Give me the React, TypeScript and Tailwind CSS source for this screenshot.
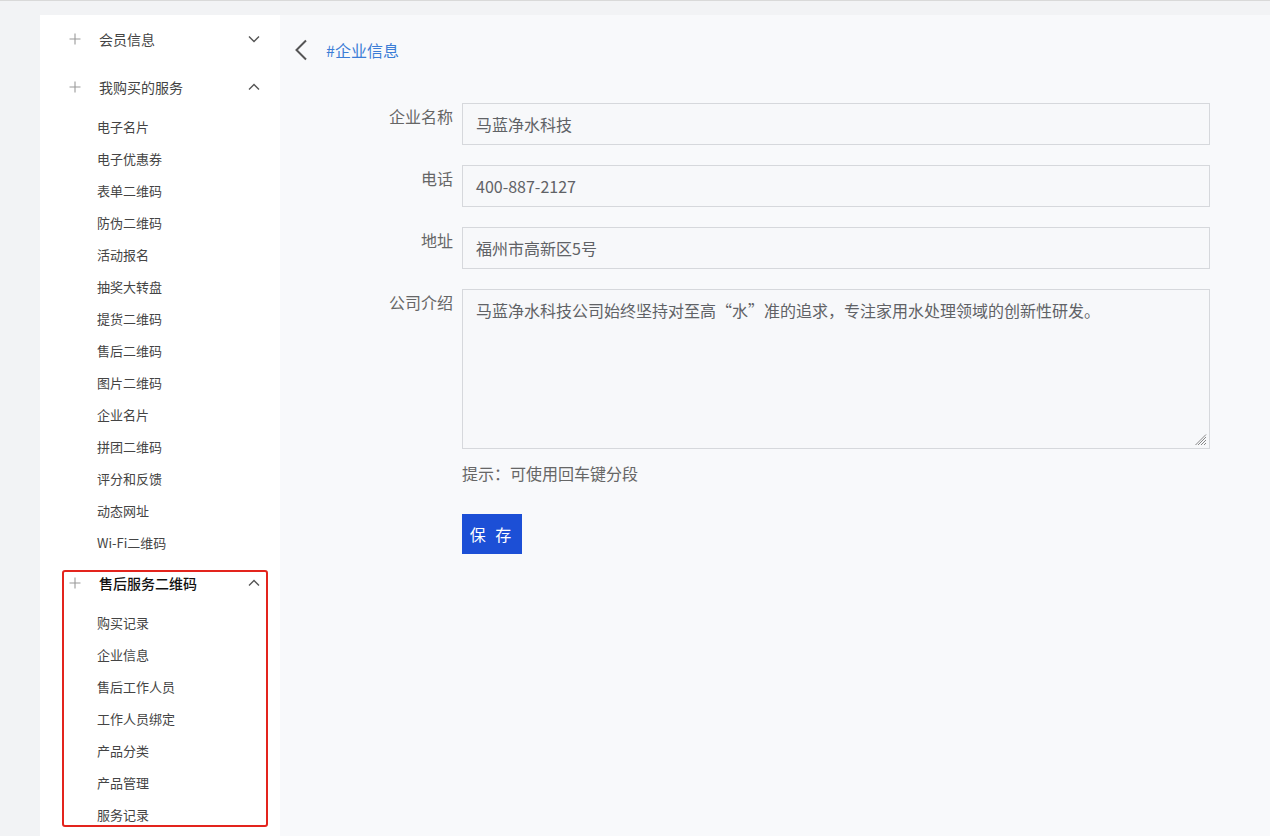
import React from 'react';

const font = { fontFamily: '"Noto Sans CJK SC", "Noto Sans", sans-serif' };

const Plus = () => (
  <svg width="12" height="12" viewBox="0 0 12 12" className="shrink-0">
    <path d="M6 0.5v11M0.5 6h11" stroke="#9a9a9a" strokeWidth="1.1" fill="none" />
  </svg>
);

const Chevron = ({ up }: { up?: boolean }) => (
  <svg width="12" height="8" viewBox="0 0 12 8" className="shrink-0">
    <path
      d={up ? 'M1 6.5L6 1.5l5 5' : 'M1 1.5l5 5 5-5'}
      stroke="#555"
      strokeWidth="1.4"
      fill="none"
    />
  </svg>
);

interface GroupProps {
  title: string;
  open?: boolean;
  bold?: boolean;
  items?: string[];
  marked?: boolean;
}

const Group: React.FC<GroupProps> = ({ title, open, bold, items = [], marked }) => (
  <div className="relative">
    <div className="flex items-center h-[48px] pl-[29px] pr-[20px]">
      <Plus />
      <span
        className={`ml-[18px] flex-1 text-[14px] ${bold ? 'text-[#111] font-medium' : 'text-[#444]'}`}
      >
        {title}
      </span>
      <Chevron up={open} />
    </div>
    {open && (
      <div>
        {items.map((it) => (
          <div key={it} className="h-[32px] flex items-center pl-[57px] text-[13px] text-[#444]">
            {it}
          </div>
        ))}
      </div>
    )}
    {/* red highlight box drawn over the group */}
    {marked && (
      <div className="absolute left-[22px] right-[12px] top-[11px] h-[257px] border-2 border-[#e3241d] rounded-[3px] pointer-events-none" />
    )}
  </div>
);

const services = [
  '电子名片',
  '电子优惠券',
  '表单二维码',
  '防伪二维码',
  '活动报名',
  '抽奖大转盘',
  '提货二维码',
  '售后二维码',
  '图片二维码',
  '企业名片',
  '拼团二维码',
  '评分和反馈',
  '动态网址',
  'Wi-Fi二维码',
];

const afterSale = ['购买记录', '企业信息', '售后工作人员', '工作人员绑定', '产品分类', '产品管理', '服务记录'];

const Field = ({ label, children }: { label: string; children: React.ReactNode }) => (
  <div className="flex">
    <div className="w-[91px] shrink-0 text-right pr-[9px] pt-[1px] text-[16px] text-[#666]">{label}</div>
    <div className="flex-1">{children}</div>
  </div>
);

const inputCls =
  'w-full h-[42px] border border-[#d6d8dc] bg-[#f7f8fa] px-[13px] flex items-center text-[16px] text-[#606266]';

export default function App() {
  return (
    <div className="w-[1270px] h-[836px] overflow-hidden bg-[#f2f3f5] border-t border-[#d9d9d9]" style={font}>
      <div className="flex pt-[14px] h-full">
        <div className="w-[40px] shrink-0" />
        <aside className="w-[240px] shrink-0 bg-white">
          <Group title="会员信息" />
          <Group title="我购买的服务" open items={services} />
          <Group title="售后服务二维码" open bold marked items={afterSale} />
        </aside>
        <main className="flex-1 bg-[#f8f9fb]">
          <div className="flex items-center h-[24px] mt-[23px] pl-[14px]">
            <svg width="14" height="22" viewBox="0 0 14 22">
              <path d="M12 1.5L2.5 11 12 20.5" stroke="#555" strokeWidth="2" fill="none" />
            </svg>
            <span className="ml-[18px] text-[16px] text-[#3c7dd6]">#企业信息</span>
          </div>
          <div className="pl-[91px] pr-[60px] mt-[41px] flex flex-col gap-[20px]">
            <Field label="企业名称">
              <div className={inputCls}>马蓝净水科技</div>
            </Field>
            <Field label="电话">
              <div className={inputCls}>400-887-2127</div>
            </Field>
            <Field label="地址">
              <div className={inputCls}>福州市高新区5号</div>
            </Field>
            <Field label="公司介绍">
              <div className="relative w-full h-[160px] border border-[#d6d8dc] bg-[#f7f8fa] px-[13px] pt-[8px] text-[16px] text-[#606266]">
                马蓝净水科技公司始终坚持对至高“水”准的追求，专注家用水处理领域的创新性研发。
                <svg width="12" height="12" viewBox="0 0 12 12" className="absolute right-[2px] bottom-[2px]">
                  <path d="M11 3L3 11M11 6L6 11M11 9L9 11M11 0.5L0.5 11" stroke="#888" strokeWidth="1" fill="none" />
                </svg>
              </div>
              <div className="mt-[12px] text-[16px] text-[#666]">提示：可使用回车键分段</div>
              <button className="mt-[29px] w-[60px] h-[40px] bg-[#1c4fd6] text-white text-[16px] tracking-[3px]">
                保 存
              </button>
            </Field>
          </div>
        </main>
      </div>
    </div>
  );
}
